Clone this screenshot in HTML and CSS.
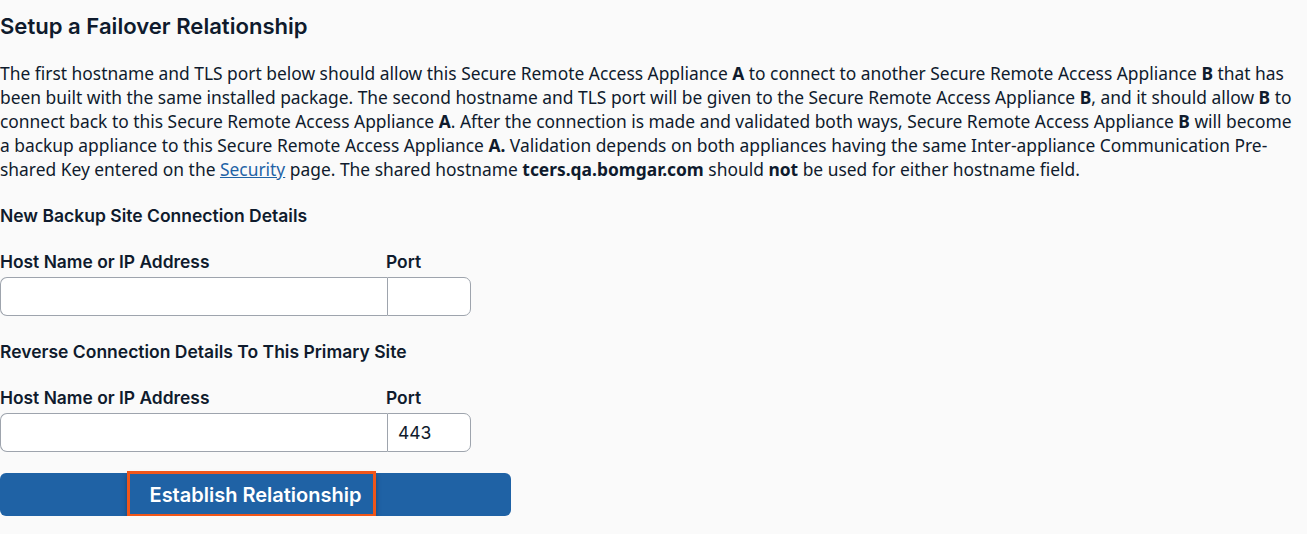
FILE: index.html
```html
<!DOCTYPE html>
<html>
<head>
<meta charset="utf-8">
<link rel="stylesheet" href="styles.css">
</head>
<body>
<div class="page">
  <h1 class="title">Setup a Failover Relationship</h1>
  <p class="intro">The first hostname and TLS port below should allow this Secure Remote Access Appliance <b>A</b> to connect to another Secure Remote Access Appliance <b>B</b> that has been built with the same installed package. The second hostname and TLS port will be given to the Secure Remote Access Appliance <b>B</b>, and it should allow <b>B</b> to connect back to this Secure Remote Access Appliance <b>A</b>. After the connection is made and validated both ways, Secure Remote Access Appliance <b>B</b> will become a backup appliance to this Secure Remote Access Appliance <b>A.</b> Validation depends on both appliances having the same Inter-appliance Communication Pre-shared Key entered on the <a href="#" class="link">Security</a> page. The shared hostname <b>tcers.qa.bomgar.com</b> should <b>not</b> be used for either hostname field.</p>

  <h2 class="section">New Backup Site Connection Details</h2>
  <div class="fields">
    <label class="label">Host Name or IP Address</label>
    <label class="label">Port</label>
    <input class="input host" type="text">
    <input class="input port" type="text">
  </div>

  <h2 class="section">Reverse Connection Details To This Primary Site</h2>
  <div class="fields">
    <label class="label">Host Name or IP Address</label>
    <label class="label">Port</label>
    <input class="input host" type="text">
    <input class="input port" type="text" value="443">
  </div>

  <div class="actions">
    <button class="btn"><span class="btn-text">Establish Relationship</span><span class="highlight"></span></button>
  </div>
</div>
</body>
</html>
```

FILE: styles.css
```css
html, body {
  margin: 0;
  padding: 0;
  background: #fafafa;
}
body {
  font-family: "Noto Sans", "Open Sans", sans-serif;
  color: #0f1b2d;
}
.page {
  width: 1305px;
  padding: 0;
}
.title {
  font-family: Inter, "Noto Sans", sans-serif;
  font-weight: 600;
  font-size: 22.1px;
  line-height: 28px;
  margin: 12px 0 0 0;
  color: #0f1b2d;
}
.intro {
  font-size: 17.4px;
  line-height: 24px;
  margin: 21px 0 0 0;
  color: #0f1b2d;
}
.intro b {
  font-weight: 700;
}
.link {
  color: #1f63a6;
  text-decoration: underline;
}
.section {
  font-family: Inter, sans-serif;
  font-weight: 600;
  font-size: 17.5px;
  line-height: 24px;
  margin: 23px 0 0 0;
  color: #0f1b2d;
}
.fields {
  display: grid;
  grid-template-columns: 387px 84px;
  margin-top: 22px;
}
.label {
  font-family: Inter, sans-serif;
  font-weight: 600;
  font-size: 17.4px;
  line-height: 24px;
  color: #0f1b2d;
  padding-bottom: 3px;
}
.label + .label {
  margin-left: -1px;
}
.input {
  box-sizing: border-box;
  height: 39px;
  border: 1px solid #9ea4ad;
  background: #fff;
  font-family: Inter, sans-serif;
  font-size: 17.5px;
  color: #0f1b2d;
  padding: 0 10px;
  margin: 0;
  outline: none;
}
.host {
  border-radius: 7px 0 0 7px;
  border-right: none;
}
.port {
  border-radius: 0 7px 7px 0;
  width: 84px;
}
.fields + .section {
  margin-top: 24px;
}
.actions {
  margin-top: 21px;
  width: 511px;
}
.btn {
  position: relative;
  display: flex;
  justify-content: center;
  align-items: center;
  width: 511px;
  height: 43px;
  border: none;
  border-radius: 6px;
  background: #1f62a5;
  color: #fff;
  font-family: Inter, sans-serif;
  font-weight: 600;
  font-size: 20px;
  padding: 0;
}
.highlight {
  position: absolute;
  left: 127px;
  top: -2px;
  width: 249px;
  height: 46px;
  box-sizing: border-box;
  border: 3px solid #f0561a;
  box-shadow: 0 4px 5px rgba(0,0,0,0.3);
}
```
